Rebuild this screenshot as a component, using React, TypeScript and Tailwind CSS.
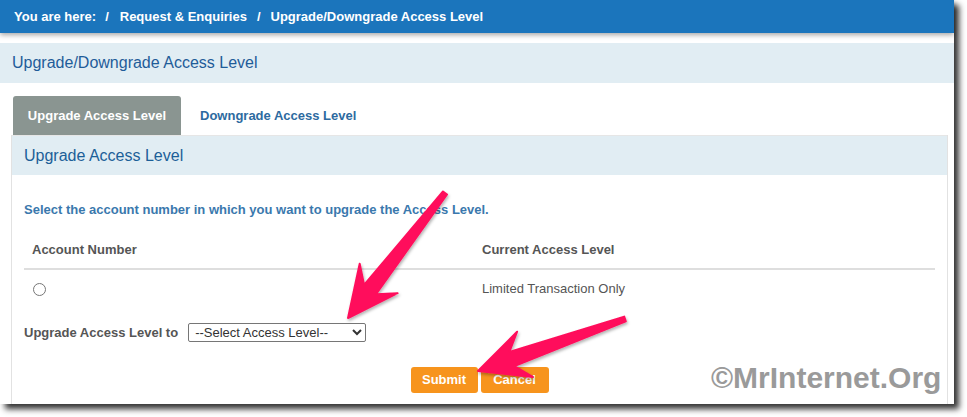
import React from "react";

type Pt = [number, number];

function arrowPoints(tail: Pt, tip: Pt): string {
  const dx = tip[0] - tail[0];
  const dy = tip[1] - tail[1];
  const len = Math.hypot(dx, dy);
  const d: Pt = [dx / len, dy / len];
  const n: Pt = [-d[1], d[0]];
  const at = (back: number, side: number): Pt => [
    tip[0] - d[0] * back + n[0] * side,
    tip[1] - d[1] * back + n[1] * side,
  ];
  const tailW = 2.5;
  const shaftW = 7.5;
  const pts: Pt[] = [
    [tail[0] + n[0] * tailW, tail[1] + n[1] * tailW],
    at(36, shaftW),
    at(50, 24),
    tip,
    at(50, -24),
    at(36, -shaftW),
    [tail[0] - n[0] * tailW, tail[1] - n[1] * tailW],
  ];
  return pts.map((p) => p.map((v) => v.toFixed(1)).join(",")).join(" ");
}

function Arrows() {
  return (
    <svg
      className="absolute left-0 top-0 pointer-events-none"
      width={967}
      height={417}
      viewBox="0 0 967 417"
    >
      <defs>
        <filter id="sh" x="-20%" y="-20%" width="140%" height="140%">
          <feDropShadow dx="1" dy="2" stdDeviation="1.5" floodColor="#000" floodOpacity="0.3" />
        </filter>
      </defs>
      <g filter="url(#sh)" fill="#ff0f5b" stroke="#ff0f5b" strokeWidth="2" strokeLinejoin="round">
        <polygon points={arrowPoints([445, 193], [348, 318])} />
        <polygon points={arrowPoints([625, 319], [478, 371])} />
      </g>
    </svg>
  );
}

export default function App() {
  return (
    <div className="relative w-[967px] h-[417px] bg-white overflow-hidden font-['Liberation_Sans',Arial,sans-serif]">
      <div className="w-[954px] h-[404px] bg-white shadow-[5px_5px_6px_rgba(0,0,0,0.8)] flex flex-col">
        {/* breadcrumb */}
        <div className="h-[33px] shrink-0 bg-[#1b75bc] shadow-[0_2px_5px_rgba(0,0,0,0.35)] flex items-center pl-[14px] text-[13px] font-bold text-white">
          <span>You are here:</span>
          <span className="ml-[9px]">/</span>
          <span className="ml-[11px]">Request &amp; Enquiries</span>
          <span className="ml-[10px]">/</span>
          <span className="ml-[10px]">Upgrade/Downgrade Access Level</span>
        </div>

        <div className="mt-[10px] h-[40px] shrink-0 bg-[#e1edf3] flex items-center pl-3 text-[16px] text-[#1f5c99]">
          Upgrade/Downgrade Access Level
        </div>

        {/* tabs */}
        <div className="pt-[13px] pl-[13px] flex items-stretch h-[52px] shrink-0">
          <div className="w-[168px] rounded-t-[3px] bg-[#8a9591] flex items-center justify-center text-[13px] font-bold text-white">
            Upgrade Access Level
          </div>
          <div className="ml-[19px] flex items-center text-[13px] font-bold text-[#2d6aa0]">
            Downgrade Access Level
          </div>
        </div>

        {/* panel */}
        <div className="ml-[11px] mr-[6px] flex-1 border-l border-r border-[#e2e2e2] flex flex-col">
          <div className="h-[40px] bg-[#e1edf3] border-t border-[#e6e6e6] flex items-center pl-3 text-[16px] text-[#1c5f98]">
            Upgrade Access Level
          </div>
          <div className="px-3 flex flex-col">
            <div className="mt-[27px] leading-[16px] text-[13px] font-bold text-[#3a78ad]">
              Select the account number in which you want to upgrade the Access Level.
            </div>
            <div className="mt-[13px] text-[13px]">
              <div className="h-[39px] flex items-center border-b-2 border-[#dedede] font-bold text-[#555]">
                <div className="w-[450px] pl-2">Account Number</div>
                <div className="pl-2">Current Access Level</div>
              </div>
              <div className="h-[38px] flex items-center text-[#555]">
                <div className="w-[450px] pl-2 flex items-center">
                  <input type="radio" name="acct" className="w-[13px] h-[13px] m-0 ml-px" />
                </div>
                <div className="pl-2">Limited Transaction Only</div>
              </div>
            </div>
            <div className="mt-[15px] h-[19px] flex items-center text-[13px]">
              <span className="font-bold text-[#555]">Upgrade Access Level to</span>
              <select className="ml-[10px] w-[178px] h-[19px] border border-[#767676] rounded-[2px] text-[13px] text-[#333] px-[2px] bg-white">
                <option>--Select Access Level--</option>
              </select>
            </div>
            <div className="mt-[25px] flex justify-center gap-[3px]">
              <button className="w-[67px] h-[26px] rounded-[3px] bg-[#f7941d] text-white text-[13px] font-bold">
                Submit
              </button>
              <button className="w-[68px] h-[26px] rounded-[3px] bg-[#f7941d] text-white text-[13px] font-bold">
                Cancel
              </button>
            </div>
          </div>
        </div>
      </div>

      <div className="absolute left-[711px] top-[363px] leading-none text-[30px] font-bold text-[#9a9a9a]">
        ©MrInternet.Org
      </div>

      <Arrows />
    </div>
  );
}
